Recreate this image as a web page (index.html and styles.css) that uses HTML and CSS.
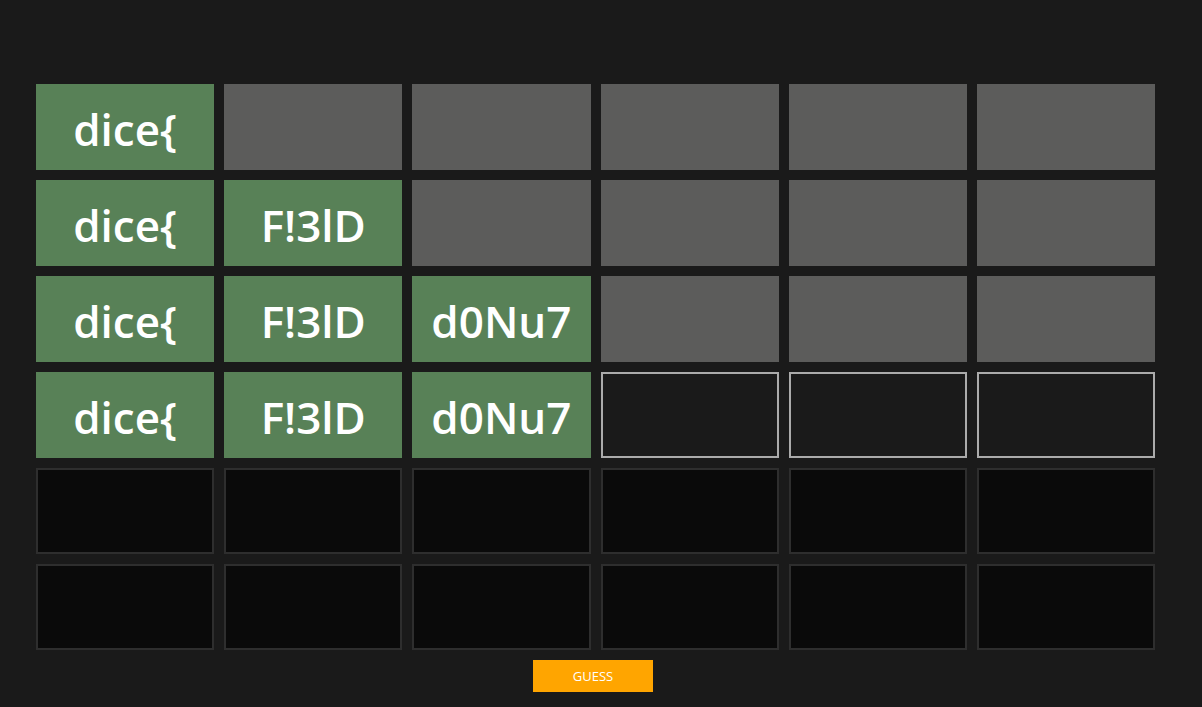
FILE: index.html
```html
<!DOCTYPE html>
<html>
<head>
<meta charset="utf-8">
<link rel="stylesheet" href="styles.css">
</head>
<body>
<div class="page">
  <div class="board">
    <div class="cell hit">dice{</div><div class="cell miss"></div><div class="cell miss"></div><div class="cell miss"></div><div class="cell miss"></div><div class="cell miss"></div>
    <div class="cell hit">dice{</div><div class="cell hit">F!3lD</div><div class="cell miss"></div><div class="cell miss"></div><div class="cell miss"></div><div class="cell miss"></div>
    <div class="cell hit">dice{</div><div class="cell hit">F!3lD</div><div class="cell hit">d0Nu7</div><div class="cell miss"></div><div class="cell miss"></div><div class="cell miss"></div>
    <div class="cell hit">dice{</div><div class="cell hit">F!3lD</div><div class="cell hit">d0Nu7</div><div class="cell active"></div><div class="cell active"></div><div class="cell active"></div>
    <div class="cell empty"></div><div class="cell empty"></div><div class="cell empty"></div><div class="cell empty"></div><div class="cell empty"></div><div class="cell empty"></div>
    <div class="cell empty"></div><div class="cell empty"></div><div class="cell empty"></div><div class="cell empty"></div><div class="cell empty"></div><div class="cell empty"></div>
  </div>
  <div class="actions">
    <button class="guess">GUESS</button>
  </div>
</div>
</body>
</html>
```
FILE: styles.css
```css
html, body {
  margin: 0;
  padding: 0;
  background: #1a1a1a;
}
body {
  font-family: "Open Sans", "Liberation Sans", sans-serif;
}
.page {
  padding: 84px 0 0 36px;
}
.board {
  width: 1119px;
  display: grid;
  grid-template-columns: repeat(6, 1fr);
  grid-auto-rows: 86px;
  gap: 10px;
}
.cell {
  box-sizing: border-box;
  display: flex;
  align-items: center;
  justify-content: center;
  padding-top: 4px;
  color: #fff;
  font-family: "Open Sans", "Lato", sans-serif;
  font-weight: 600;
  font-size: 44px;
}
.hit { background: #588157; }
.miss { background: #5c5c5b; }
.active { background: #1a1a1a; border: 2px solid #ababab; }
.empty { background: #0a0a0a; border: 2px solid #2e2e2e; }
.actions {
  width: 1119px;
  display: flex;
  justify-content: center;
  padding-top: 10px;
}
.guess {
  width: 120px;
  height: 32px;
  margin-left: -5px;
  border: none;
  background: #ffa500;
  color: #fff;
  font-family: "Open Sans", sans-serif;
  font-size: 13px;
  padding: 0;
}
```
